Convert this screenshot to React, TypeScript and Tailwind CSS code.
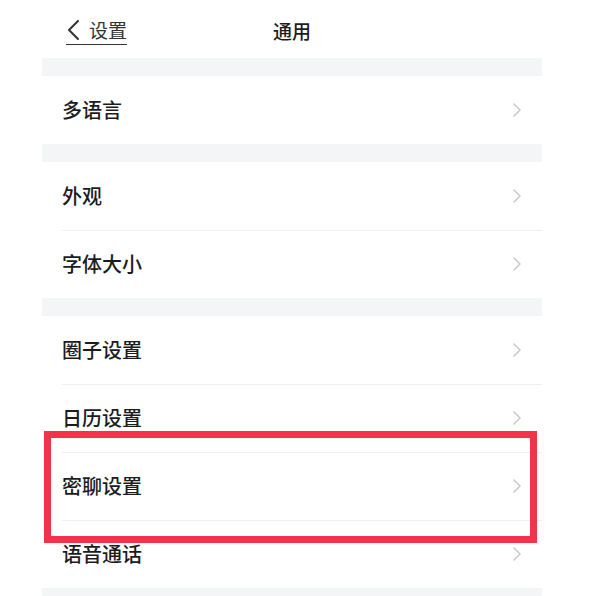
import React from 'react';

const font = { fontFamily: '"Noto Sans CJK SC", "Noto Sans", sans-serif' };

const Chevron = () => (
    <svg width="10" height="16" viewBox="0 0 10 16" className="shrink-0">
        <path d="M2 2 L8 8 L2 14" fill="none" stroke="#c9c9cc" strokeWidth="1.5" strokeLinecap="round" strokeLinejoin="round" />
    </svg>
);

const Row = ({ label, divider }: { label: string; divider?: boolean }) => (
    <div className="relative flex items-center h-[68px] pl-5 pr-[20px] bg-white">
        {divider && <div className="absolute top-0 left-5 right-0 h-px bg-[#efeff1]" />}
        <span className="flex-1 text-[20px] font-medium text-[#1c1c1e]">{label}</span>
        <Chevron />
    </div>
);

const Gap = () => <div className="h-[18px] bg-[#f4f5f7]" />;

export default function App() {
    return (
        <div className="relative w-[599px] h-[596px] bg-white overflow-hidden" style={font}>
            <div className="ml-[42px] w-[500px]">
                {/* header */}
                <div className="relative flex items-center h-[58px] pt-[4px]">
                    <div className="ml-6 flex items-center gap-[9px] border-b-[1.5px] border-[#333] pb-[1px] text-[19px] text-[#333] leading-[26px]">
                        <svg width="14" height="22" viewBox="0 0 14 22">
                            <path d="M12 2 L3 11 L12 20" fill="none" stroke="#333" strokeWidth="2" strokeLinecap="round" strokeLinejoin="round" />
                        </svg>
                        <span>设置</span>
                    </div>
                    <div className="absolute left-0 right-0 text-center text-[19px] font-medium text-[#1c1c1e] pointer-events-none">通用</div>
                </div>

                <Gap />
                <Row label="多语言" />
                <Gap />
                <Row label="外观" />
                <Row label="字体大小" divider />
                <Gap />
                <Row label="圈子设置" />
                <Row label="日历设置" divider />
                <Row label="密聊设置" divider />
                <Row label="语音通话" divider />
                <Gap />
            </div>

            {/* highlight box */}
            <div className="absolute left-[44px] top-[431px] w-[493px] h-[112px] border-[7px] border-[#f1344a]" />
        </div>
    );
}
